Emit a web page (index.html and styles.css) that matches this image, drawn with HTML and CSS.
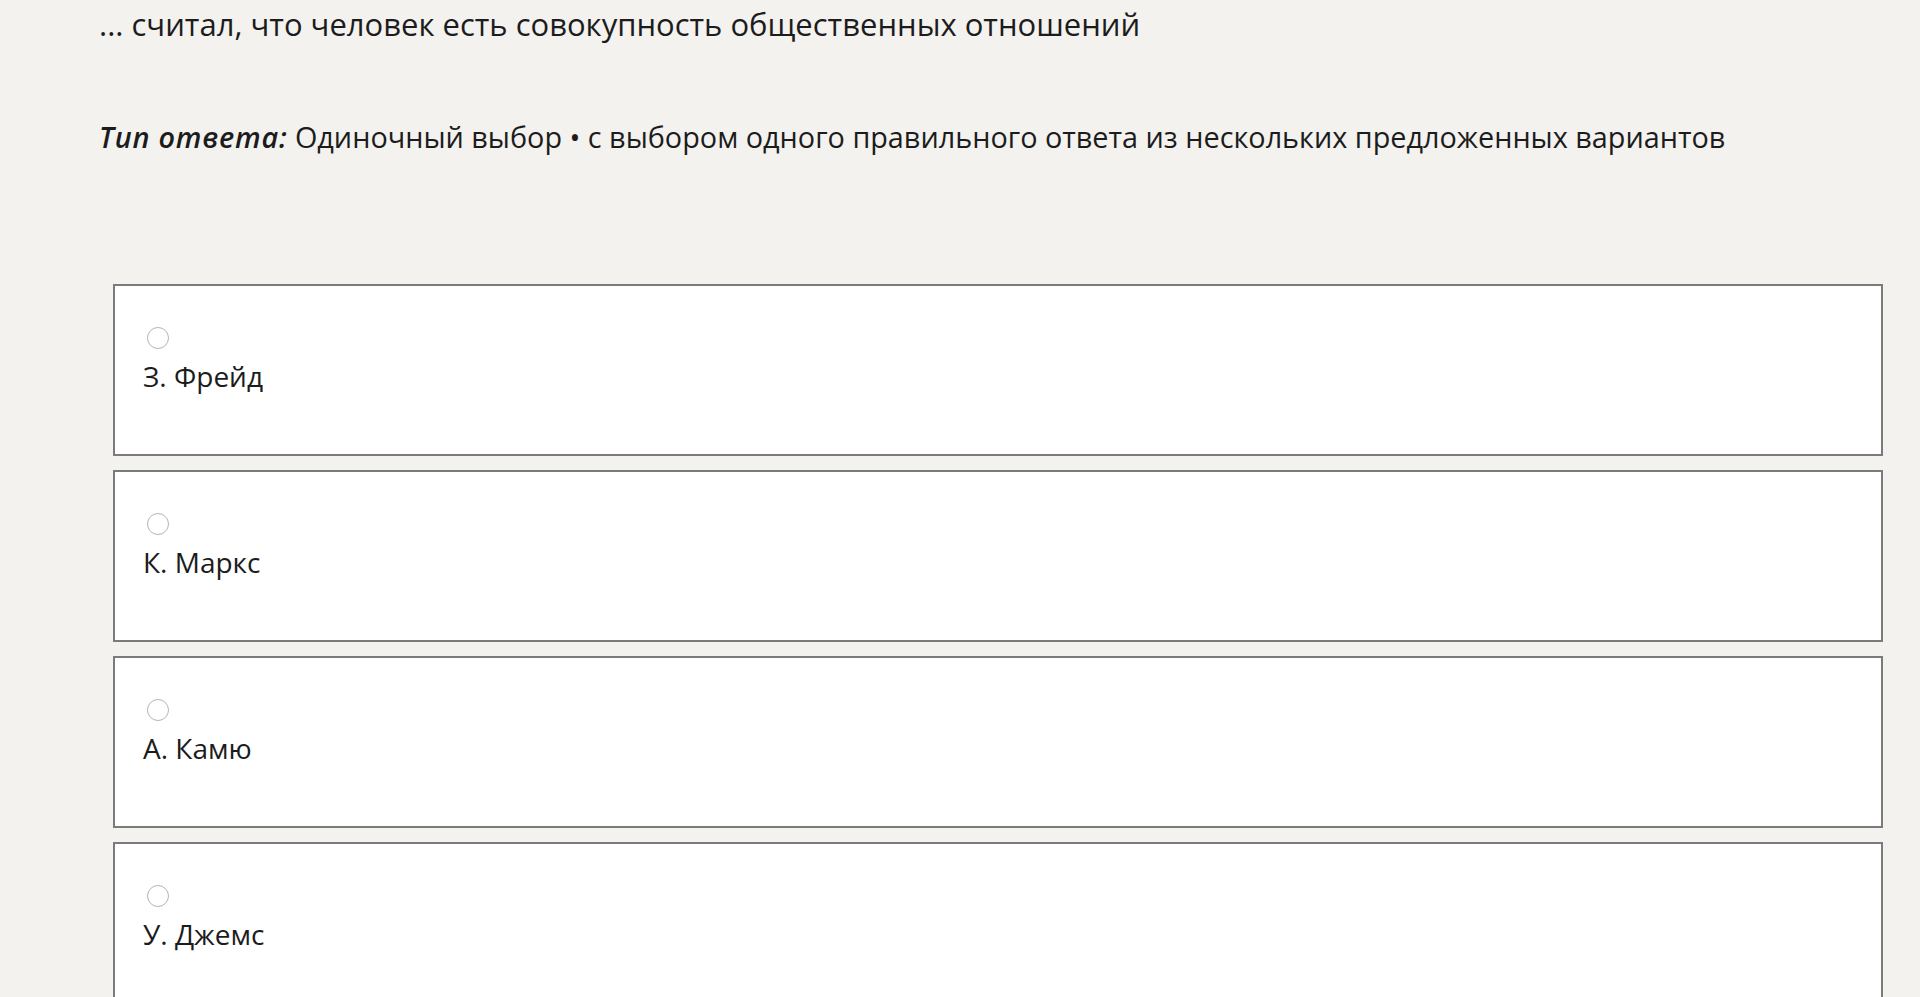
FILE: index.html
```html
<!DOCTYPE html>
<html lang="ru">
<head>
    <meta charset="UTF-8">
    <meta name="viewport" content="width=device-width, initial-scale=1.0">
    <title>Вопрос</title>
    <link rel="stylesheet" href="styles.css">
</head>
<body>
    <div id="page">
        <p class="question">... считал, что человек есть совокупность общественных отношений</p>
        <p class="answer-type"><b>Тип ответа:</b> Одиночный выбор • с выбором одного правильного ответа из нескольких предложенных вариантов</p>
        <div class="options">
            <label class="option">
                <input type="radio" name="answer" value="1">
                <span>З. Фрейд</span>
            </label>
            <label class="option">
                <input type="radio" name="answer" value="2">
                <span>К. Маркс</span>
            </label>
            <label class="option">
                <input type="radio" name="answer" value="3">
                <span>А. Камю</span>
            </label>
            <label class="option">
                <input type="radio" name="answer" value="4">
                <span>У. Джемс</span>
            </label>
        </div>
    </div>
</body>
</html>
```

FILE: styles.css
```css
*{
    margin: 0;
    padding: 0;
    box-sizing: border-box;
}
body{
    background-color: #f3f2ef;
    color: #1c1c1c;
    font-family: "Open Sans", "Noto Sans", sans-serif;
    font-size: 28px;
    line-height: 38px;
}
#page{
    padding: 5px 37px 0 99px;
}
.question{
    font-size: 31px;
}
.answer-type{
    margin-top: 75px;
    font-size: 28.8px;
}
.answer-type b{
    font-style: italic;
    font-weight: 600;
    letter-spacing: 0.8px;
}
.options{
    margin-top: 128px;
    margin-left: 14px;
    display: flex;
    flex-direction: column;
    gap: 14px;
}
.option{
    display: flex;
    flex-direction: column;
    align-items: flex-start;
    gap: 8px;
    height: 172px;
    padding: 41px 28px 0 28px;
    background-color: white;
    border: 2px solid #7b7b7b;
}
.option input{
    appearance: none;
    width: 22px;
    height: 22px;
    margin-left: 4px;
    border: 1.5px solid #b5b5b5;
    border-radius: 50%;
    background-color: white;
}
.option input:checked{
    border: 6px solid #0a64c8;
}
```
